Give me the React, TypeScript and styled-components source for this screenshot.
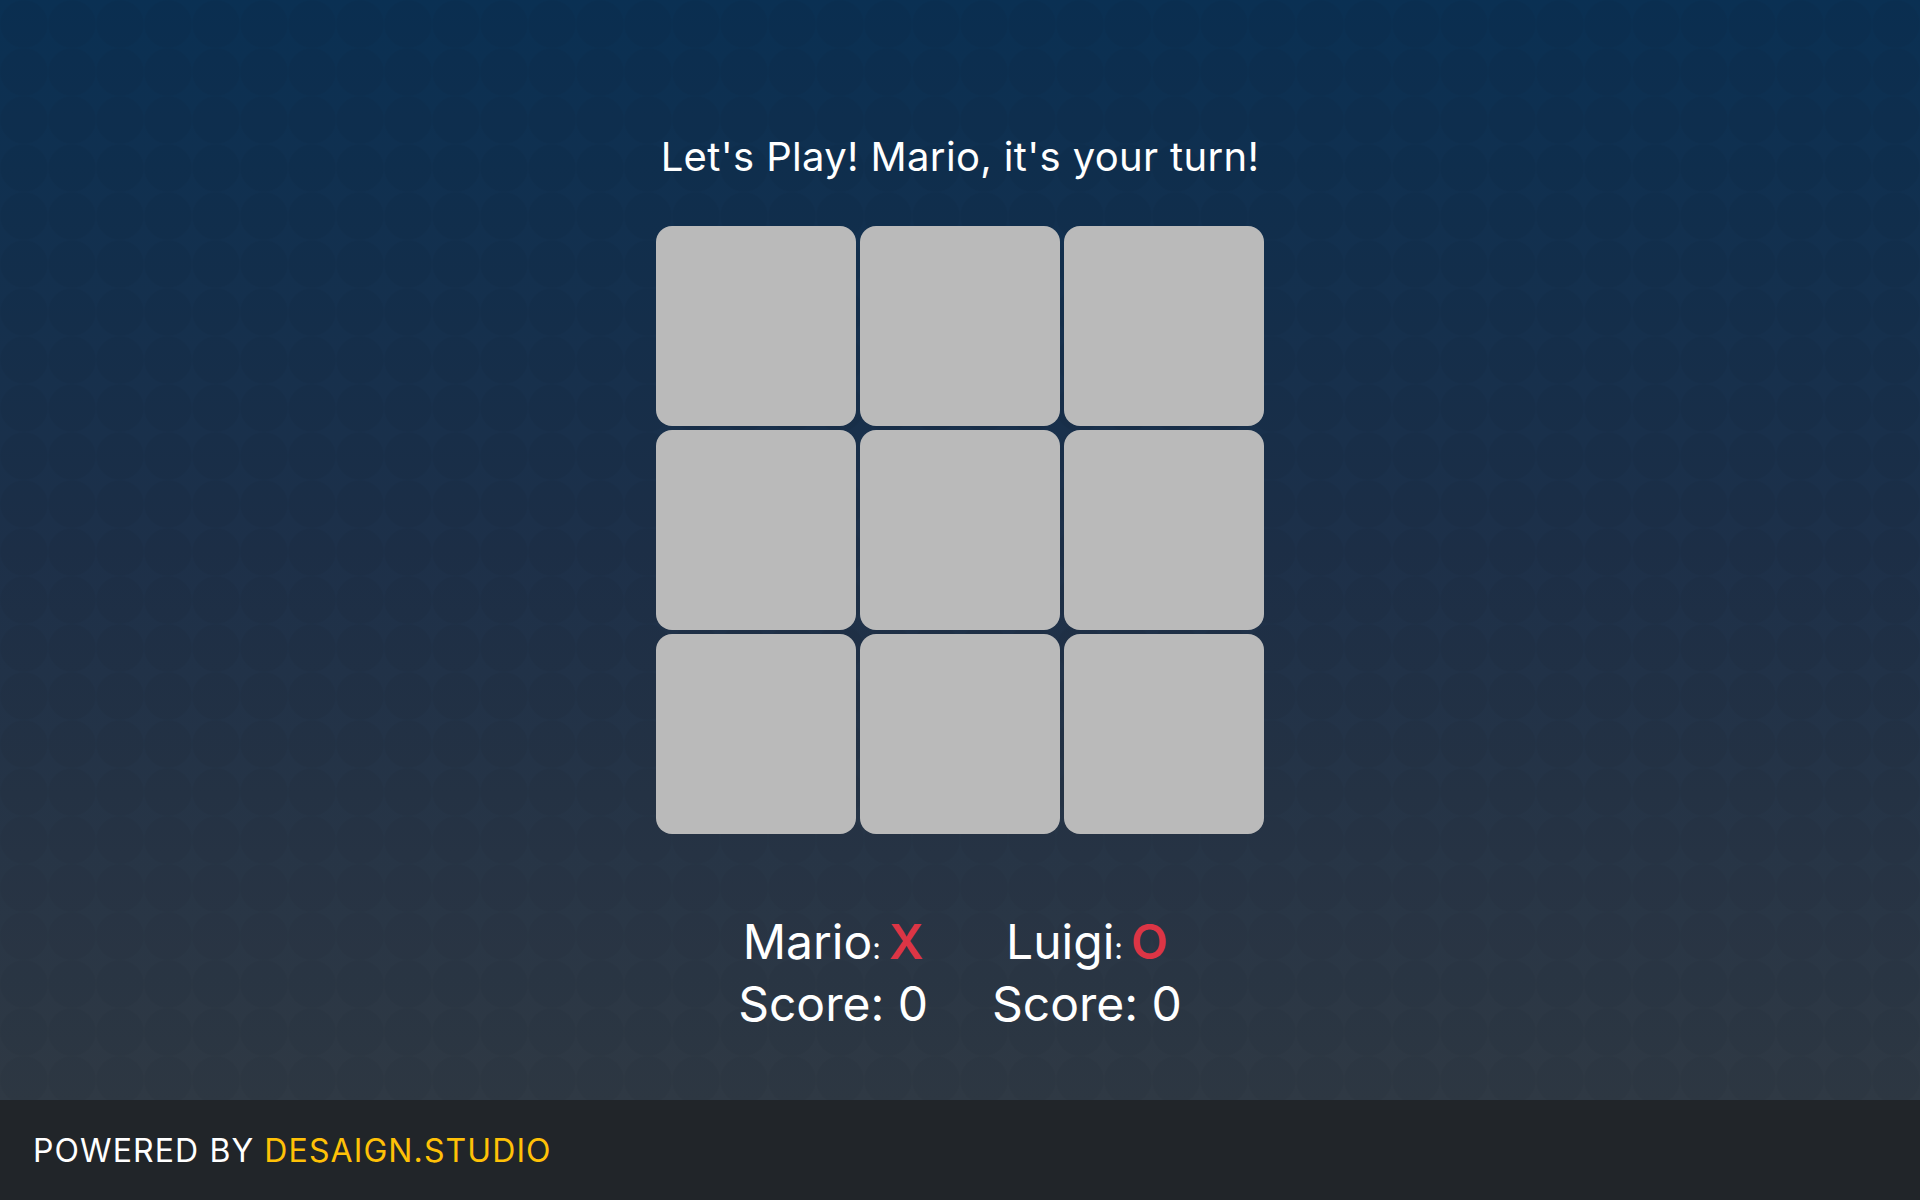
import { useState } from "react";
import styled, { createGlobalStyle } from "styled-components";

const GlobalStyle = createGlobalStyle`
  * {
    box-sizing: border-box;
  }

  html,
  body {
    margin: 0;
    padding: 0;
    height: 100%;
  }

  body {
    font-family: "Inter", "Noto Sans", sans-serif;
    color: #ffffff;
    background: #212529;
  }
`;

const Page = styled.div`
  display: flex;
  flex-direction: column;
  min-height: 100vh;
`;

const Main = styled.main`
  flex: 1;
  display: flex;
  flex-direction: column;
  align-items: center;
  padding-top: 133px;
  background-color: #1c2f46;
  background-image: radial-gradient(circle at center, rgba(0, 0, 0, 0.035) 68%, rgba(0, 0, 0, 0) 72%),
    linear-gradient(to bottom, #0a3053 0%, #1d3049 50%, #2f3944 100%);
  background-size: 48px 48px, 100% 100%;
`;

const Title = styled.h1`
  margin: 0 0 45px;
  font-size: 40px;
  font-weight: 400;
  line-height: 48px;
  letter-spacing: 0.35px;
`;

const Board = styled.div`
  display: grid;
  grid-template-columns: repeat(3, 200px);
  grid-template-rows: repeat(3, 200px);
  gap: 4px;
`;

const Cell = styled.button<{ $mark: string }>`
  border: none;
  padding: 0;
  border-radius: 16px;
  background: #bababa;
  color: #dc3545;
  font-family: inherit;
  font-size: 120px;
  font-weight: 600;
  cursor: pointer;

  &:hover {
    background: ${({ $mark }) => ($mark ? "#bababa" : "#c4c4c4")};
  }
`;

const Players = styled.div`
  display: flex;
  gap: 64px;
  margin-top: 80px;
`;

const Player = styled.div`
  display: flex;
  flex-direction: column;
  align-items: center;
  font-size: 48px;
  line-height: 56px;
`;

const Colon = styled.span`
  font-size: 30px;
  margin-right: 8px;
`;

const Mark = styled.span`
  color: #dc3545;
  font-weight: 600;
`;

const Footer = styled.footer`
  height: 100px;
  display: flex;
  align-items: center;
  padding: 0 33px;
  background: #212529;
  font-size: 32px;
  letter-spacing: 1.1px;
`;

const Brand = styled.span`
  color: #ffc107;
`;

const players = [
  { name: "Mario", mark: "X" },
  { name: "Luigi", mark: "O" },
];

const lines = [
  [0, 1, 2],
  [3, 4, 5],
  [6, 7, 8],
  [0, 3, 6],
  [1, 4, 7],
  [2, 5, 8],
  [0, 4, 8],
  [2, 4, 6],
];

const App = () => {
  const [cells, setCells] = useState<string[]>(Array(9).fill(""));
  const [turn, setTurn] = useState(0);
  const [scores, setScores] = useState([0, 0]);
  const [winner, setWinner] = useState<number | null>(null);

  const handleClick = (index: number) => {
    if (cells[index] || winner !== null) return;
    const next = [...cells];
    next[index] = players[turn].mark;
    setCells(next);

    const won = lines.some((line) => line.every((i) => next[i] === players[turn].mark));
    if (won) {
      setWinner(turn);
      setScores((s) => s.map((v, i) => (i === turn ? v + 1 : v)));
      setTimeout(() => {
        setCells(Array(9).fill(""));
        setWinner(null);
      }, 1500);
      return;
    }
    if (next.every(Boolean)) {
      setTimeout(() => setCells(Array(9).fill("")), 1500);
    }
    setTurn(turn === 0 ? 1 : 0);
  };

  const message =
    winner !== null
      ? `${players[winner].name} wins this round!`
      : `Let's Play! ${players[turn].name}, it's your turn!`;

  return (
    <>
      <GlobalStyle />
      <Page>
        <Main>
          <Title>{message}</Title>
          <Board>
            {cells.map((mark, i) => (
              <Cell key={i} $mark={mark} onClick={() => handleClick(i)}>
                {mark}
              </Cell>
            ))}
          </Board>
          <Players>
            {players.map((player, i) => (
              <Player key={player.name}>
                <span>
                  {player.name}
                  <Colon>:</Colon>
                  <Mark>{player.mark}</Mark>
                </span>
                <span>Score: {scores[i]}</span>
              </Player>
            ))}
          </Players>
        </Main>
        <Footer>
          POWERED BY&nbsp;<Brand>DESAIGN.STUDIO</Brand>
        </Footer>
      </Page>
    </>
  );
};

export default App;
